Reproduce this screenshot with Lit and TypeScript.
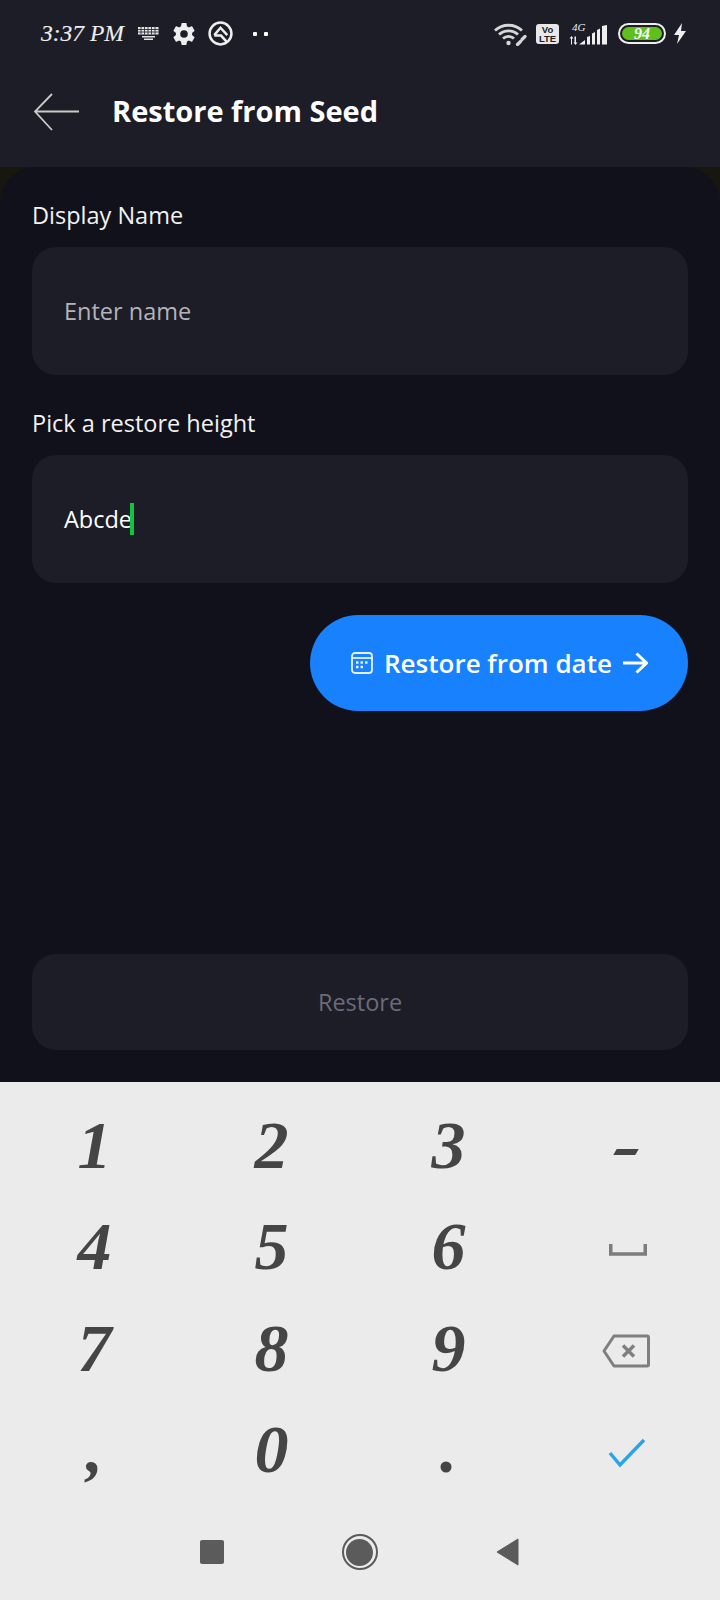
import { LitElement, html, css, svg } from 'lit';
import { customElement } from 'lit/decorators.js';

const digitRows = [
  ['1', '2', '3', 'dash'],
  ['4', '5', '6', 'space'],
  ['7', '8', '9', 'back'],
  [',', '0', '.', 'done'],
];

const icons: Record<string, unknown> = {
  space: svg`<svg class="space" width="38" height="12" viewBox="0 0 38 12"><path d="M1.750 0v10h34.500V0" fill="none" stroke="#7c7c7c" stroke-width="3.500"/></svg>`,
  back: svg`<svg class="shift" width="48" height="34" viewBox="0 0 48 34"><path d="M12 2h33a1.500 1.500 0 0 1 1.500 1.500v27a1.500 1.500 0 0 1-1.500 1.500H12L2 17z" fill="none" stroke="#7f7f7f" stroke-width="3" stroke-linejoin="round"/><path d="M21 11.500l11 11M32 11.500l-11 11" stroke="#7f7f7f" stroke-width="3.500"/></svg>`,
  done: svg`<svg class="done" width="38" height="30" viewBox="0 0 38 30"><path d="M2 15l10 12L36 2" fill="none" stroke="#2ba4e6" stroke-width="3.500"/></svg>`,
};

@customElement('app-root')
export class AppRoot extends LitElement {
  static styles = css`
    :host {
      display: flex;
      flex-direction: column;
      width: 720px;
      height: 1600px;
      overflow: hidden;
      font-family: 'Open Sans', 'Noto Sans', sans-serif;
      background: #1c1d27;
      color: #fff;
    }
    .status {
      height: 67px;
      display: flex;
      align-items: center;
      padding: 0 33px 0 41px;
      flex: none;
    }
    .time {
      font: italic 24px 'Liberation Serif', serif;
      color: #eee;
      width: 97px;
      white-space: nowrap;
      transform: scaleX(0.98);
      transform-origin: left;
      -webkit-text-stroke: 0.15px #eee;
    }
    .status svg {
      display: block;
      flex: none;
    }
    .gear {
      margin-left: 12px;
    }
    .ring {
      margin-left: 11px;
    }
    .dots {
      margin-left: 20px;
    }
    .wifi {
      margin-left: auto;
    }
    .volte {
      margin-left: 9px;
    }
    .signal {
      margin-left: 10px;
    }
    .battery {
      margin-left: 10px;
      width: 48px;
      height: 21px;
      box-sizing: border-box;
      border: 2px solid #eee;
      border-radius: 11px;
      padding: 2px;
      display: flex;
    }
    .battery span {
      flex: 1;
      background: #5fc01c;
      border-radius: 7px;
      font: italic bold 16px/13px 'Liberation Serif', serif;
      text-align: center;
      color: #fff;
    }
    .bolt {
      margin-left: 7px;
    }
    .toolbar {
      height: 100px;
      flex: none;
      display: flex;
      align-items: center;
      padding: 0 0 10px 33px;
      box-sizing: border-box;
    }
    .toolbar h1 {
      margin: -2px 0 0 33px;
      font-size: 29px;
      line-height: 40px;
      font-weight: 700;
    }
    .shell {
      height: 915px;
      flex: none;
      background: #17170f;
    }
    .body {
      height: 100%;
      box-sizing: border-box;
      background: #10111a;
      border-radius: 36px 36px 0 0;
      padding: 32px;
      display: flex;
      flex-direction: column;
    }
    label {
      font-size: 23.500px;
      line-height: 32px;
      color: #f2f2f2;
      margin-bottom: 16px;
    }
    .field {
      height: 128px;
      flex: none;
      box-sizing: border-box;
      background: #1c1d27;
      border-radius: 24px;
      padding: 0 32px 1px;
      display: flex;
      align-items: center;
      font-size: 23.500px;
      margin-bottom: 32px;
    }
    .placeholder {
      color: #b4b4b8;
    }
    .caret {
      width: 4px;
      height: 32px;
      margin-left: -2px;
      background: #0fc43f;
    }
    .date-btn {
      align-self: flex-end;
      height: 96px;
      width: 378px;
      box-sizing: border-box;
      padding-left: 1px;
      border-radius: 48px;
      background: #1781fe;
      display: flex;
      align-items: center;
      justify-content: center;
      gap: 11px;
      font-size: 26px;
      font-weight: 600;
    }
    .restore {
      margin-top: auto;
      height: 96px;
      flex: none;
      border-radius: 24px;
      background: #1c1d27;
      color: #6b6b79;
      font-size: 23.500px;
      font-weight: 500;
      padding-bottom: 1px;
      box-sizing: border-box;
      display: flex;
      align-items: center;
      justify-content: center;
    }
    .keyboard {
      flex: 1;
      background: #ebebeb;
      display: flex;
      flex-direction: column;
    }
    .keys {
      display: grid;
      grid-template-columns: repeat(4, 177px);
      grid-auto-rows: 101.500px;
      padding: 12px 0 0 6px;
    }
    .key {
      display: flex;
      align-items: center;
      justify-content: center;
      color: #454545;
      font: italic 700 68px/1 'Liberation Serif', serif;
    }
    .key svg {
      display: block;
      position: relative;
      top: 3px;
    }
    .key svg.space {
      top: 4px;
      left: 2px;
    }
    .key svg.done {
      top: 4px;
      left: 1px;
    }
    .dash {
      width: 22px;
      height: 6px;
      position: relative;
      top: 7px;
      background: #454545;
      transform: skewX(-30deg);
    }
    .nav {
      display: flex;
      align-items: center;
      justify-content: center;
      height: 64px;
      margin-top: 20px;
      padding-right: 2px;
      gap: 118px;
    }
    .square {
      width: 24px;
      height: 24px;
      border-radius: 2px;
      background: #5b5b5b;
    }
    .circle {
      width: 36px;
      height: 36px;
      box-sizing: border-box;
      border: 2.500px solid #5b5b5b;
      padding: 2.500px;
      border-radius: 50%;
    }
    .circle div {
      width: 100%;
      height: 100%;
      border-radius: 50%;
      background: #5b5b5b;
    }
  `;

  private renderKey(key: string) {
    if (key === 'dash') {
      return html`<div class="key"><div class="dash"></div></div>`;
    }
    return html`<div class="key">${icons[key] ?? key}</div>`;
  }

  render() {
    return html`
      <div class="status">
        <span class="time">3:37 PM</span>
        <svg width="21" height="13" viewBox="0 0 21 13" fill="#e4e4e4">
          <path d="M0 0h20.500v7.500H0zM4 9h13v1.500H4zM6 11.500h9V13H6z"/>
          <path d="M3 0v7.500M6.500 0v7.500M10 0v7.500M13.500 0v7.500M17 0v7.500M0 2.500h20.500M0 5h20.500" stroke="#1c1d27" stroke-width="0.800"/>
        </svg>
        <svg class="gear" width="26" height="26" viewBox="0 0 24 24">
          <path fill="#eee" fill-rule="evenodd" d="M19.400 13c.1-.3.100-.7.100-1s0-.7-.1-1l2.200-1.700c.2-.2.200-.4.100-.6l-2.100-3.600c-.1-.2-.4-.3-.6-.2l-2.600 1c-.5-.4-1.100-.7-1.700-1L14.300 2.200c0-.3-.2-.4-.5-.4h-3.600c-.3 0-.5.200-.5.400l-.4 2.700c-.6.200-1.200.6-1.700 1l-2.600-1c-.2-.1-.5 0-.6.200L2.300 8.700c-.1.200-.1.500.1.600L4.600 11c0 .3-.1.700-.1 1s0 .7.100 1l-2.200 1.700c-.2.200-.2.400-.1.600l2.100 3.600c.1.200.4.300.6.200l2.600-1c.5.400 1.100.7 1.700 1l.4 2.700c0 .2.200.4.500.4h3.600c.3 0 .5-.2.500-.4l.4-2.700c.6-.3 1.200-.6 1.700-1l2.600 1c.2.100.5 0 .6-.2l2.100-3.600c.1-.2.100-.5-.1-.6zM12 15.500a3.500 3.500 0 1 1 0-7 3.500 3.500 0 0 1 0 7z"/>
        </svg>
        <svg class="ring" width="25" height="25" viewBox="0 0 24 24" fill="none" stroke="#eee" stroke-width="2.400">
          <circle cx="12" cy="12" r="10.500"/>
          <path d="M6 13.500L12 6.500l6.500 7"/>
          <path d="M6 14h6.500l5.500 6"/>
        </svg>
        <svg class="dots" width="16" height="6" viewBox="0 0 16 6" fill="#fff">
          <rect x="0" y="1" width="4" height="4" rx="1"/>
          <rect x="11" y="1" width="4" height="4" rx="1"/>
        </svg>
        <svg class="wifi" width="33" height="24" viewBox="0 0 33 24" fill="none" stroke="#d6d6d6" stroke-width="2.800">
          <path d="M1 8.500a20 20 0 0 1 27 0M5 12.500a14 14 0 0 1 19 0M9 16.500a8 8 0 0 1 11 0"/>
          <circle cx="14.500" cy="21" r="2.200" fill="#d6d6d6" stroke="none"/>
          <path d="M23.500 22.500l3-3M28 17.500l3-3" stroke-width="3.200" stroke-linecap="round"/>
          <path d="M26 20l2.500-2.500" stroke-width="1.500"/>
        </svg>
        <svg class="volte" width="23" height="20" viewBox="0 0 23 20">
          <rect width="23" height="20" rx="3" fill="#e8e8e8"/>
          <text x="11.500" y="9" text-anchor="middle" font-family="Liberation Sans" font-weight="700" font-size="9.500" fill="#1c1d27">Vo</text>
          <text x="11.500" y="18" text-anchor="middle" font-family="Liberation Sans" font-weight="700" font-size="9.500" fill="#1c1d27">LTE</text>
        </svg>
        <svg class="signal" width="39" height="28" viewBox="0 -4 39 28" fill="#eee">
          <text x="3" y="6.500" font-family="Liberation Serif" font-style="italic" font-size="11">4G</text>
          <path d="M2 20.500v-6H.5L2.500 12l2 2.500H3v6zM5.500 12.500v6H4.500l2 2.500 2-2.500H7v-6z"/>
          <path d="M10 20.500l6-4.500v4.500zM18 20.500v-7.500l3-1v8.500zM23 20.500V9.500l3-1.500v12.500zM28 20.500V6l3-1.500v16zM33 20.500V2l5-1v19.500z"/>
        </svg>
        <div class="battery"><span>94</span></div>
        <svg class="bolt" width="14" height="21" viewBox="0 0 14 21">
          <path d="M9 0L1 12h5l-2 9 9-13H8z" fill="#eee"/>
        </svg>
      </div>
      <div class="toolbar">
        <svg width="46" height="38" viewBox="0 0 46 38" fill="none" stroke="#c9c9c9" stroke-width="1.800">
          <path d="M19 1L2 18.500 19 37M2 18.500h44"/>
        </svg>
        <h1>Restore from Seed</h1>
      </div>
      <div class="shell">
        <div class="body">
          <label>Display Name</label>
          <div class="field"><span class="placeholder">Enter name</span></div>
          <label>Pick a restore height</label>
          <div class="field"><span>Abcde</span><span class="caret"></span></div>
          <div class="date-btn">
            <svg width="22" height="22" viewBox="0 0 22 22" fill="none" stroke="#e6f0ff" stroke-width="1.800">
              <rect x="1" y="1" width="20" height="20" rx="3"/>
              <path d="M1 6h20"/>
              <path d="M5 10.500h2.500M9.500 10.500h2.500M14 10.500h2.500M5 15h2.500M9.500 15h2.500" stroke-width="2.400"/>
            </svg>
            <span>Restore from date</span>
            <svg width="25" height="22" viewBox="0 0 25 22" fill="none" stroke="#fff" stroke-width="3">
              <path d="M0 11h23.500M13.500 1.500L23.500 11l-10 9.500"/>
            </svg>
          </div>
          <div class="restore">Restore</div>
        </div>
      </div>
      <div class="keyboard">
        <div class="keys">
          ${digitRows.map((row) => row.map((key) => this.renderKey(key)))}
        </div>
        <div class="nav">
          <div class="square"></div>
          <div class="circle"><div></div></div>
          <svg width="23" height="28" viewBox="0 0 23 28"><path d="M22 1v26L1 14z" fill="#5b5b5b" stroke="#5b5b5b" stroke-linejoin="round"/></svg>
        </div>
      </div>
    `;
  }
}
